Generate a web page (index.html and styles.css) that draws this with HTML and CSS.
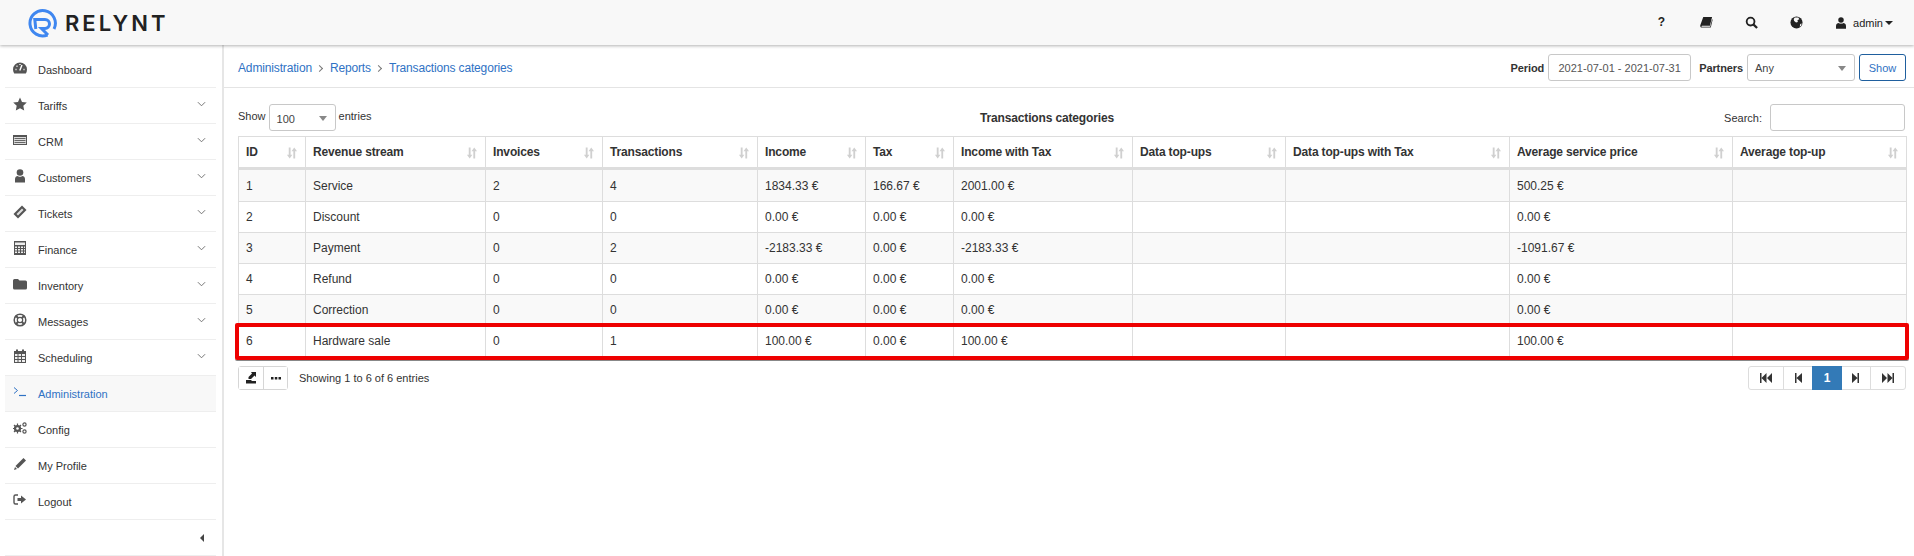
FILE: index.html
```html
<!DOCTYPE html>
<html lang="en">
<head>
    <meta charset="UTF-8">
    <title>Transactions categories - Relynt</title>
    <link rel="stylesheet" href="styles.css">
</head>
<body>
    <!-- Shared icons -->
    <svg class="sprite" xmlns="http://www.w3.org/2000/svg">
        <symbol id="i-sort" viewBox="0 0 12 12">
            <path d="M3 0h2v8h2L4 12 1 8h2zM8 12V4H6l3-4 3 4h-2v8z"/>
        </symbol>
        <symbol id="i-chev" viewBox="0 0 10 6">
            <path d="M1 1l4 4 4-4" fill="none" stroke="currentColor" stroke-width="1"/>
        </symbol>
    </svg>

    <header class="topbar">
        <a class="logo">
            <svg class="logo-mark" viewBox="0 0 30 30">
                <path d="M19.500 27A12.700 12.700 0 1 1 26 21" fill="none" stroke="#3f87f0" stroke-width="3"/>
                <path d="M7.800 21L6.800 11.500H17A4.500 4.500 0 0 1 17 20.500H13.500L20 27" fill="none" stroke="#3f87f0" stroke-width="3"/>
            </svg>
            <span class="logo-text">RELYNT</span>
        </a>
        <nav class="top-icons">
            <span class="top-icon help">?</span>
            <svg class="top-icon" viewBox="0 0 14 14"><path d="M3.500 1H13l-2.300 9.500H2.200c-.7 0-.9 1-.2 1H11l2-8 .6.6-2 8.400H2c-1.500 0-2-1.200-1.700-2.500z"/></svg>
            <svg class="top-icon" viewBox="0 0 14 14"><circle cx="6" cy="6" r="4.200" fill="none" stroke="currentColor" stroke-width="2"/><path d="M9 9l4 4" stroke="currentColor" stroke-width="2.400"/></svg>
            <svg class="top-icon" viewBox="0 0 14 14"><circle cx="7" cy="7" r="6.500"/><path d="M5 1.500l4 0 1 2-2 1 .5 2-2 .5-2-1.500-.5-2zM11 8.500l1.500-.5-.5 2.500-1.500 1z" fill="#f8f8f8"/></svg>
            <span class="user-menu">
                <svg class="user-icon" viewBox="0 0 12 14"><circle cx="6" cy="3.500" r="3.300"/><path d="M0 14v-3.500C0 8 2 7 3 7c1 1 5 1 6 0 1 0 3 1 3 3.500V14z"/></svg>
                admin
                <span class="caret"></span>
            </span>
        </nav>
    </header>

    <div class="layout">
        <aside class="sidebar">
            <ul class="side-menu">
                <li class="side-item">
                    <svg class="side-icon" viewBox="0 0 14 12"><path d="M7 .5a7 7 0 0 0-7 7c0 1.500.4 2.800 1.200 4h11.600A7.500 7.500 0 0 0 14 7.500a7 7 0 0 0-7-7z"/><path d="M6.800 8.500L9 3M2.500 7.500h1M3.500 4.200h1M7 2v1M10.500 7.500h1" stroke="#fff" stroke-width="1.400" fill="none"/></svg>
                    Dashboard
                </li>
                <li class="side-item">
                    <svg class="side-icon" viewBox="0 0 14 14"><path d="M7 .5l2 4.400 4.800.6-3.500 3.300.9 4.700L7 11.200 2.800 13.500l.9-4.700L.2 5.500 5 4.900z"/></svg>
                    Tariffs
                    <svg class="chev"><use href="#i-chev"/></svg>
                </li>
                <li class="side-item">
                    <svg class="side-icon" viewBox="0 0 14 12"><path d="M0 1h14v10H0z"/><path d="M1 3h12v7H1z" fill="#ddd"/><path d="M1.500 4.500h11M1.500 6.500h11M1.500 8.500h11" stroke="#666" stroke-width="1"/></svg>
                    CRM
                    <svg class="chev"><use href="#i-chev"/></svg>
                </li>
                <li class="side-item">
                    <svg class="side-icon" viewBox="0 0 14 14"><circle cx="7" cy="3.500" r="3.300"/><path d="M2 13.500V10c0-2 1.500-3 2.500-3 1 1 4 1 5 0 1 0 2.500 1 2.500 3v3.500z"/></svg>
                    Customers
                    <svg class="chev"><use href="#i-chev"/></svg>
                </li>
                <li class="side-item">
                    <svg class="side-icon" viewBox="0 0 14 14"><path d="M9 .5L13.500 5 5 13.500.5 9z"/><path d="M9 3.500L10.500 5 5 10.500 3.500 9z" fill="#ddd"/></svg>
                    Tickets
                    <svg class="chev"><use href="#i-chev"/></svg>
                </li>
                <li class="side-item">
                    <svg class="side-icon" viewBox="0 0 14 14"><path d="M1 0h12v14H1z"/><path d="M2 1.500h10V4H2z" fill="#eee"/><path d="M2 5.500h2V7H2zM5 5.500h2V7H5zM8 5.500h2V7H8zM11 5.500h1V7h-1zM2 8h2v1.500H2zM5 8h2v1.500H5zM8 8h2v1.500H8zM11 8h1v1.500h-1zM2 10.500h2V12H2zM5 10.500h2V12H5zM8 10.500h2V12H8zM11 10.500h1V12h-1z" fill="#eee"/></svg>
                    Finance
                    <svg class="chev"><use href="#i-chev"/></svg>
                </li>
                <li class="side-item">
                    <svg class="side-icon" viewBox="0 0 14 12"><path d="M1.500 1H5l1.500 1.500h6A1.500 1.500 0 0 1 14 4v6a1.500 1.500 0 0 1-1.500 1.500h-11A1.500 1.500 0 0 1 0 10V2.500A1.500 1.500 0 0 1 1.500 1z"/></svg>
                    Inventory
                    <svg class="chev"><use href="#i-chev"/></svg>
                </li>
                <li class="side-item">
                    <svg class="side-icon" viewBox="0 0 14 14"><circle cx="7" cy="7" r="5.800" fill="none" stroke="currentColor" stroke-width="1.500"/><circle cx="7" cy="7" r="2.700" fill="none" stroke="currentColor" stroke-width="1.200"/><path d="M2.800 2.800l2.500 2.500M11.200 2.800L8.700 5.300M2.800 11.200l2.500-2.500M11.200 11.200L8.700 8.700" stroke="currentColor" stroke-width="2"/></svg>
                    Messages
                    <svg class="chev"><use href="#i-chev"/></svg>
                </li>
                <li class="side-item">
                    <svg class="side-icon" viewBox="0 0 14 14"><path d="M1 2h12v12H1z"/><path d="M3 .5h2v3H3zM9 .5h2v3H9z"/><path d="M2 5h2.500v2H2zM5.500 5H8v2H5.500zM9 5h3v2H9zM2 8h2.500v2H2zM5.500 8H8v2H5.500zM9 8h3v2H9zM2 11h2.500v2H2zM5.500 11H8v2H5.500zM9 11h3v2H9z" fill="#eee"/></svg>
                    Scheduling
                    <svg class="chev"><use href="#i-chev"/></svg>
                </li>
                <li class="side-item active">
                    <svg class="side-icon" viewBox="0 0 14 12"><path d="M1 1.500l3.500 3L1 7.500" fill="none" stroke="currentColor" stroke-width="1"/><path d="M6 9.500h7" stroke="currentColor" stroke-width="1.200"/></svg>
                    Administration
                </li>
                <li class="side-item">
                    <svg class="side-icon" viewBox="0 0 14 12"><circle cx="4.500" cy="6.500" r="2.600" fill="none" stroke="currentColor" stroke-width="2"/><path d="M4.500 1.500v10M-.5 6.500h10M1 3l7 7M8 3l-7 7" stroke="currentColor" stroke-width="1.200"/><circle cx="4.500" cy="6.500" r="1.300" fill="#fff"/><circle cx="11.500" cy="2.500" r="1.600" fill="none" stroke="currentColor" stroke-width="1.200"/><circle cx="11.500" cy="9.500" r="1.600" fill="none" stroke="currentColor" stroke-width="1.200"/></svg>
                    Config
                </li>
                <li class="side-item">
                    <svg class="side-icon" viewBox="0 0 14 14"><path d="M10.500 1l2.500 2.500L5 11.500 2.500 9zM2 10l2 2-3 1z"/></svg>
                    My Profile
                </li>
                <li class="side-item">
                    <svg class="side-icon" viewBox="0 0 14 12"><path d="M5 1H2.500A1.500 1.500 0 0 0 1 2.500v6A1.500 1.500 0 0 0 2.500 10H5" fill="none" stroke="currentColor" stroke-width="1.400"/><path d="M4.500 4H8V1.500L13 5.500 8 9.500V7H4.500z"/></svg>
                    Logout
                </li>
                <li class="side-item collapse-row"><span class="collapse-caret"></span></li>
            </ul>
        </aside>

        <main class="main">
            <div class="crumb-bar">
                <div class="crumbs">
                    <a>Administration</a>
                    <span class="crumb-sep"></span>
                    <a>Reports</a>
                    <span class="crumb-sep"></span>
                    <a>Transactions categories</a>
                </div>
                <form class="filters">
                    <label class="filter-label">Period</label>
                    <div class="field date-field">2021-07-01 - 2021-07-31</div>
                    <label class="filter-label partners-label">Partners</label>
                    <div class="field select-field partners-field">Any<span class="select-arrow"></span></div>
                    <button class="show-button" type="button">Show</button>
                </form>
            </div>

            <div class="report">
                <div class="table-tools">
                    <div class="length-control">
                        Show
                        <div class="field select-field length-field">100<span class="select-arrow"></span></div>
                        entries
                    </div>
                    <div class="table-title">Transactions categories</div>
                    <div class="search-control">
                        Search:
                        <div class="field search-field"></div>
                    </div>
                </div>

                <div class="table-wrap">
                    <table class="report-table">
                        <colgroup>
                            <col class="c-id"><col class="c-stream"><col class="c-inv"><col class="c-trans"><col class="c-inc">
                            <col class="c-tax"><col class="c-inctax"><col class="c-data"><col class="c-datatax"><col class="c-avg"><col class="c-top">
                        </colgroup>
                        <thead>
                            <tr>
                                <th>ID<svg class="sort"><use href="#i-sort"/></svg></th>
                                <th>Revenue stream<svg class="sort"><use href="#i-sort"/></svg></th>
                                <th>Invoices<svg class="sort"><use href="#i-sort"/></svg></th>
                                <th>Transactions<svg class="sort"><use href="#i-sort"/></svg></th>
                                <th>Income<svg class="sort"><use href="#i-sort"/></svg></th>
                                <th>Tax<svg class="sort"><use href="#i-sort"/></svg></th>
                                <th>Income with Tax<svg class="sort"><use href="#i-sort"/></svg></th>
                                <th>Data top-ups<svg class="sort"><use href="#i-sort"/></svg></th>
                                <th>Data top-ups with Tax<svg class="sort"><use href="#i-sort"/></svg></th>
                                <th>Average service price<svg class="sort"><use href="#i-sort"/></svg></th>
                                <th>Average top-up<svg class="sort"><use href="#i-sort"/></svg></th>
                            </tr>
                        </thead>
                        <tbody>
                            <tr><td>1</td><td>Service</td><td>2</td><td>4</td><td>1834.33 €</td><td>166.67 €</td><td>2001.00 €</td><td></td><td></td><td>500.25 €</td><td></td></tr>
                            <tr><td>2</td><td>Discount</td><td>0</td><td>0</td><td>0.00 €</td><td>0.00 €</td><td>0.00 €</td><td></td><td></td><td>0.00 €</td><td></td></tr>
                            <tr><td>3</td><td>Payment</td><td>0</td><td>2</td><td>-2183.33 €</td><td>0.00 €</td><td>-2183.33 €</td><td></td><td></td><td>-1091.67 €</td><td></td></tr>
                            <tr><td>4</td><td>Refund</td><td>0</td><td>0</td><td>0.00 €</td><td>0.00 €</td><td>0.00 €</td><td></td><td></td><td>0.00 €</td><td></td></tr>
                            <tr><td>5</td><td>Correction</td><td>0</td><td>0</td><td>0.00 €</td><td>0.00 €</td><td>0.00 €</td><td></td><td></td><td>0.00 €</td><td></td></tr>
                            <tr><td>6</td><td>Hardware sale</td><td>0</td><td>1</td><td>100.00 €</td><td>0.00 €</td><td>100.00 €</td><td></td><td></td><td>100.00 €</td><td></td></tr>
                        </tbody>
                    </table>
                    <!-- Annotation drawn over the last row -->
                    <div class="highlight-box"></div>
                </div>

                <div class="table-footer">
                    <div class="footer-left">
                        <div class="tool-buttons">
                            <button class="tool-button" type="button">
                                <svg viewBox="0 0 12 12"><path d="M6 0h5v5L9.500 3.500 6 7H3.500V5L7 1.500zM1 8h5l1 1h4v2.500H1z"/></svg>
                            </button>
                            <button class="tool-button" type="button">
                                <svg viewBox="0 0 12 12"><path d="M1 5h2.500v2.500H1zM4.800 5h2.500v2.500H4.800zM8.500 5H11v2.500H8.500z"/></svg>
                            </button>
                        </div>
                        <span class="table-info">Showing 1 to 6 of 6 entries</span>
                    </div>
                    <div class="pagination">
                        <span class="page-link first"><svg viewBox="0 0 12 10"><path d="M0 0h1.500v10H0zM6.500 0v10L1.500 5zM12 0v10L7 5z"/></svg></span>
                        <span class="page-link prev"><svg viewBox="0 0 12 10"><path d="M3 0h1.500v10H3zM10 0v10L4.500 5z"/></svg></span>
                        <span class="page-link current">1</span>
                        <span class="page-link next"><svg viewBox="0 0 12 10"><path d="M2 0v10l5.500-5zM7.500 0H9v10H7.500z"/></svg></span>
                        <span class="page-link last"><svg viewBox="0 0 12 10"><path d="M0 0v10l5-5zM5.500 0v10l5-5zM10.500 0H12v10h-1.500z"/></svg></span>
                    </div>
                </div>
            </div>
        </main>
    </div>
</body>
</html>
```

FILE: styles.css
```css
/* Base styles */
:root {
    --color-link: #2f72c4;
    --color-text: #333333;
    --color-line: #dddddd;
    --color-field: #c8c8c8;
    --color-icon: #555555;
    --font-primary: "Liberation Sans", Arial, sans-serif;
}

* {
    margin: 0;
    padding: 0;
    box-sizing: border-box;
}

html, body {
    height: 100%;
    overflow: hidden;
}

body {
    font-family: var(--font-primary);
    font-size: 11px;
    color: var(--color-text);
    background: #ffffff;
}

.sprite {
    display: none;
}

/* Top bar */
.topbar {
    height: 45px;
    background: #f8f8f8;
    box-shadow: 0 1px 3px rgba(0, 0, 0, 0.3);
    display: flex;
    align-items: center;
    justify-content: space-between;
    position: relative;
    z-index: 2;
}

.logo {
    display: flex;
    align-items: center;
    margin-left: 28px;
}

.logo-mark {
    width: 30px;
    height: 30px;
}

.logo-text {
    margin-left: 7px;
    font-family: Inter, sans-serif;
    font-size: 22px;
    font-weight: 600;
    letter-spacing: 3px;
    color: #222222;
}

.top-icons {
    display: flex;
    align-items: center;
    color: #222222;
    margin-right: 21px;
}

.top-icon {
    width: 13px;
    height: 13px;
    margin: 0 16px;
    fill: currentColor;
}

.help {
    width: 8px;
    margin: 0 18.5px;
    font-size: 12px;
    font-weight: 700;
    line-height: 13px;
    text-align: center;
}

.user-menu {
    display: flex;
    align-items: center;
    margin-left: 17px;
}

.user-icon {
    width: 10px;
    height: 12px;
    margin-right: 7px;
    fill: currentColor;
}

.caret {
    width: 0;
    height: 0;
    margin-left: 2px;
    border-left: 4px solid transparent;
    border-right: 4px solid transparent;
    border-top: 4px solid #222222;
}

/* Layout */
.layout {
    display: flex;
    height: 511px;
}

.sidebar {
    width: 224px;
    flex-shrink: 0;
    padding: 7px 6px 0 5px;
    border-right: 2px solid #e6e6e6;
}

.side-item {
    display: flex;
    align-items: center;
    height: 36px;
    padding: 0 10px 0 8px;
    border-bottom: 1px solid #eeeeee;
    list-style: none;
}

.side-icon {
    width: 14px;
    height: 14px;
    margin: -4px 11px 0 0;
    fill: var(--color-icon);
    color: var(--color-icon);
    flex-shrink: 0;
}

.chev {
    width: 9px;
    height: 6px;
    margin: -4px 0 0 auto;
    color: #666666;
}

.side-item.active {
    background: #f8f8f8;
    color: var(--color-link);
}

.side-item.active .side-icon {
    fill: none;
    color: var(--color-link);
}

.collapse-row {
    justify-content: flex-end;
}

.collapse-caret {
    width: 0;
    height: 0;
    margin-right: 2px;
    border-top: 4px solid transparent;
    border-bottom: 4px solid transparent;
    border-right: 4px solid #444444;
}

/* Main area */
.main {
    flex: 1;
    min-width: 0;
}

.crumb-bar {
    height: 43px;
    padding: 3px 8px 0 14px;
    border-bottom: 1px solid #e4e4e4;
    display: flex;
    align-items: center;
    justify-content: space-between;
}

.crumbs {
    display: flex;
    align-items: center;
    margin-top: 1px;
    font-size: 12px;
    letter-spacing: -0.15px;
    color: var(--color-link);
}

.crumb-sep {
    width: 5px;
    height: 5px;
    margin: 0 8px 0 5px;
    border-top: 1px solid #777777;
    border-right: 1px solid #777777;
    transform: rotate(45deg);
}

.filters {
    display: flex;
    align-items: center;
}

.filter-label {
    font-weight: 700;
    letter-spacing: -0.1px;
    margin-right: 4px;
}

.partners-label {
    margin-left: 8px;
}

.field {
    height: 27px;
    border: 1px solid var(--color-field);
    border-radius: 3px;
    background: #ffffff;
    display: flex;
    align-items: center;
}

.date-field {
    width: 143px;
    justify-content: center;
    color: #555555;
}

.select-field {
    position: relative;
    padding-left: 7px;
    color: #444444;
}

.partners-field {
    width: 108px;
}

.select-arrow {
    position: absolute;
    right: 8px;
    top: 11px;
    width: 0;
    height: 0;
    border-left: 4px solid transparent;
    border-right: 4px solid transparent;
    border-top: 5px solid #888888;
}

.show-button {
    width: 47px;
    height: 27px;
    margin-left: 4px;
    border: 1px solid #1f5f9e;
    border-radius: 3px;
    background: #ffffff;
    color: var(--color-link);
    font: inherit;
}

/* Report table */
.report {
    padding: 16px 8px 0 14px;
}

.table-tools {
    display: grid;
    grid-template-columns: 1fr auto 1fr;
    align-items: start;
    height: 32px;
}

.length-control {
    display: flex;
    align-items: center;
    gap: 3px;
    height: 24px;
}

.length-field {
    width: 67px;
    margin-bottom: -3px;
    padding-top: 3px;
}

.table-title {
    padding: 7px 50px 0 0;
    font-size: 12px;
    font-weight: 700;
    letter-spacing: -0.15px;
}

.search-control {
    display: flex;
    align-items: center;
    justify-content: flex-end;
    gap: 8px;
    padding-right: 1px;
}

.search-field {
    width: 135px;
}

.table-wrap {
    position: relative;
}

.report-table {
    width: 1668px;
    border-collapse: collapse;
    table-layout: fixed;
    font-size: 12px;
}

.c-id { width: 67px; }
.c-stream { width: 180px; }
.c-inv { width: 117px; }
.c-trans { width: 155px; }
.c-inc { width: 108px; }
.c-tax { width: 88px; }
.c-inctax { width: 179px; }
.c-data { width: 153px; }
.c-datatax { width: 224px; }
.c-avg { width: 223px; }
.c-top { width: 174px; }

.report-table th,
.report-table td {
    border: 1px solid var(--color-line);
    padding: 0 7px;
    text-align: left;
}

.report-table th {
    position: relative;
    height: 32px;
    font-weight: 700;
    letter-spacing: -0.15px;
    border-bottom-width: 3px;
}

.report-table td {
    height: 31px;
}

.report-table tbody tr:first-child td {
    height: 33px;
}

.report-table tbody tr:nth-child(odd) {
    background: #f9f9f9;
}

.report-table tbody tr:last-child {
    background: #ffffff;
}

.sort {
    position: absolute;
    right: 8px;
    top: 10px;
    width: 11px;
    height: 12px;
    fill: #d0d0d0;
}

/* Red annotation frame */
.highlight-box {
    position: absolute;
    left: -3px;
    right: -3px;
    bottom: -3px;
    height: 37px;
    border: 4px solid #ee0000;
    border-radius: 2px;
    box-shadow: 0 1px 0 #888888;
    pointer-events: none;
}

/* Table footer */
.table-footer {
    display: flex;
    align-items: flex-start;
    justify-content: space-between;
    margin-top: 9px;
}

.footer-left {
    display: flex;
    align-items: center;
}

.tool-buttons {
    display: flex;
    border: 1px solid #d6d6d6;
    border-radius: 3px;
}

.tool-button {
    width: 24px;
    height: 22px;
    border: none;
    background: #ffffff;
    display: flex;
    align-items: center;
    justify-content: center;
}

.tool-button + .tool-button {
    border-left: 1px solid #d6d6d6;
}

.tool-button svg {
    width: 12px;
    height: 12px;
    fill: #222222;
}

.table-info {
    margin-left: 11px;
}

.pagination {
    display: flex;
    height: 24px;
    border: 1px solid #dddddd;
    border-radius: 3px;
    font-size: 12px;
}

.page-link {
    display: flex;
    align-items: center;
    justify-content: center;
    width: 29px;
    border-left: 1px solid #dddddd;
}

.page-link:first-child {
    width: 34px;
    border-left: none;
}

.page-link.next {
    width: 28px;
    border-left: none;
}

.page-link:last-child {
    width: 35px;
}

.page-link svg {
    width: 12px;
    height: 10px;
    fill: #333333;
}

.page-link.current {
    width: 30px;
    margin: -1px 0;
    background: #337ab7;
    border-left: none;
    color: #ffffff;
    font-weight: 700;
}
```
